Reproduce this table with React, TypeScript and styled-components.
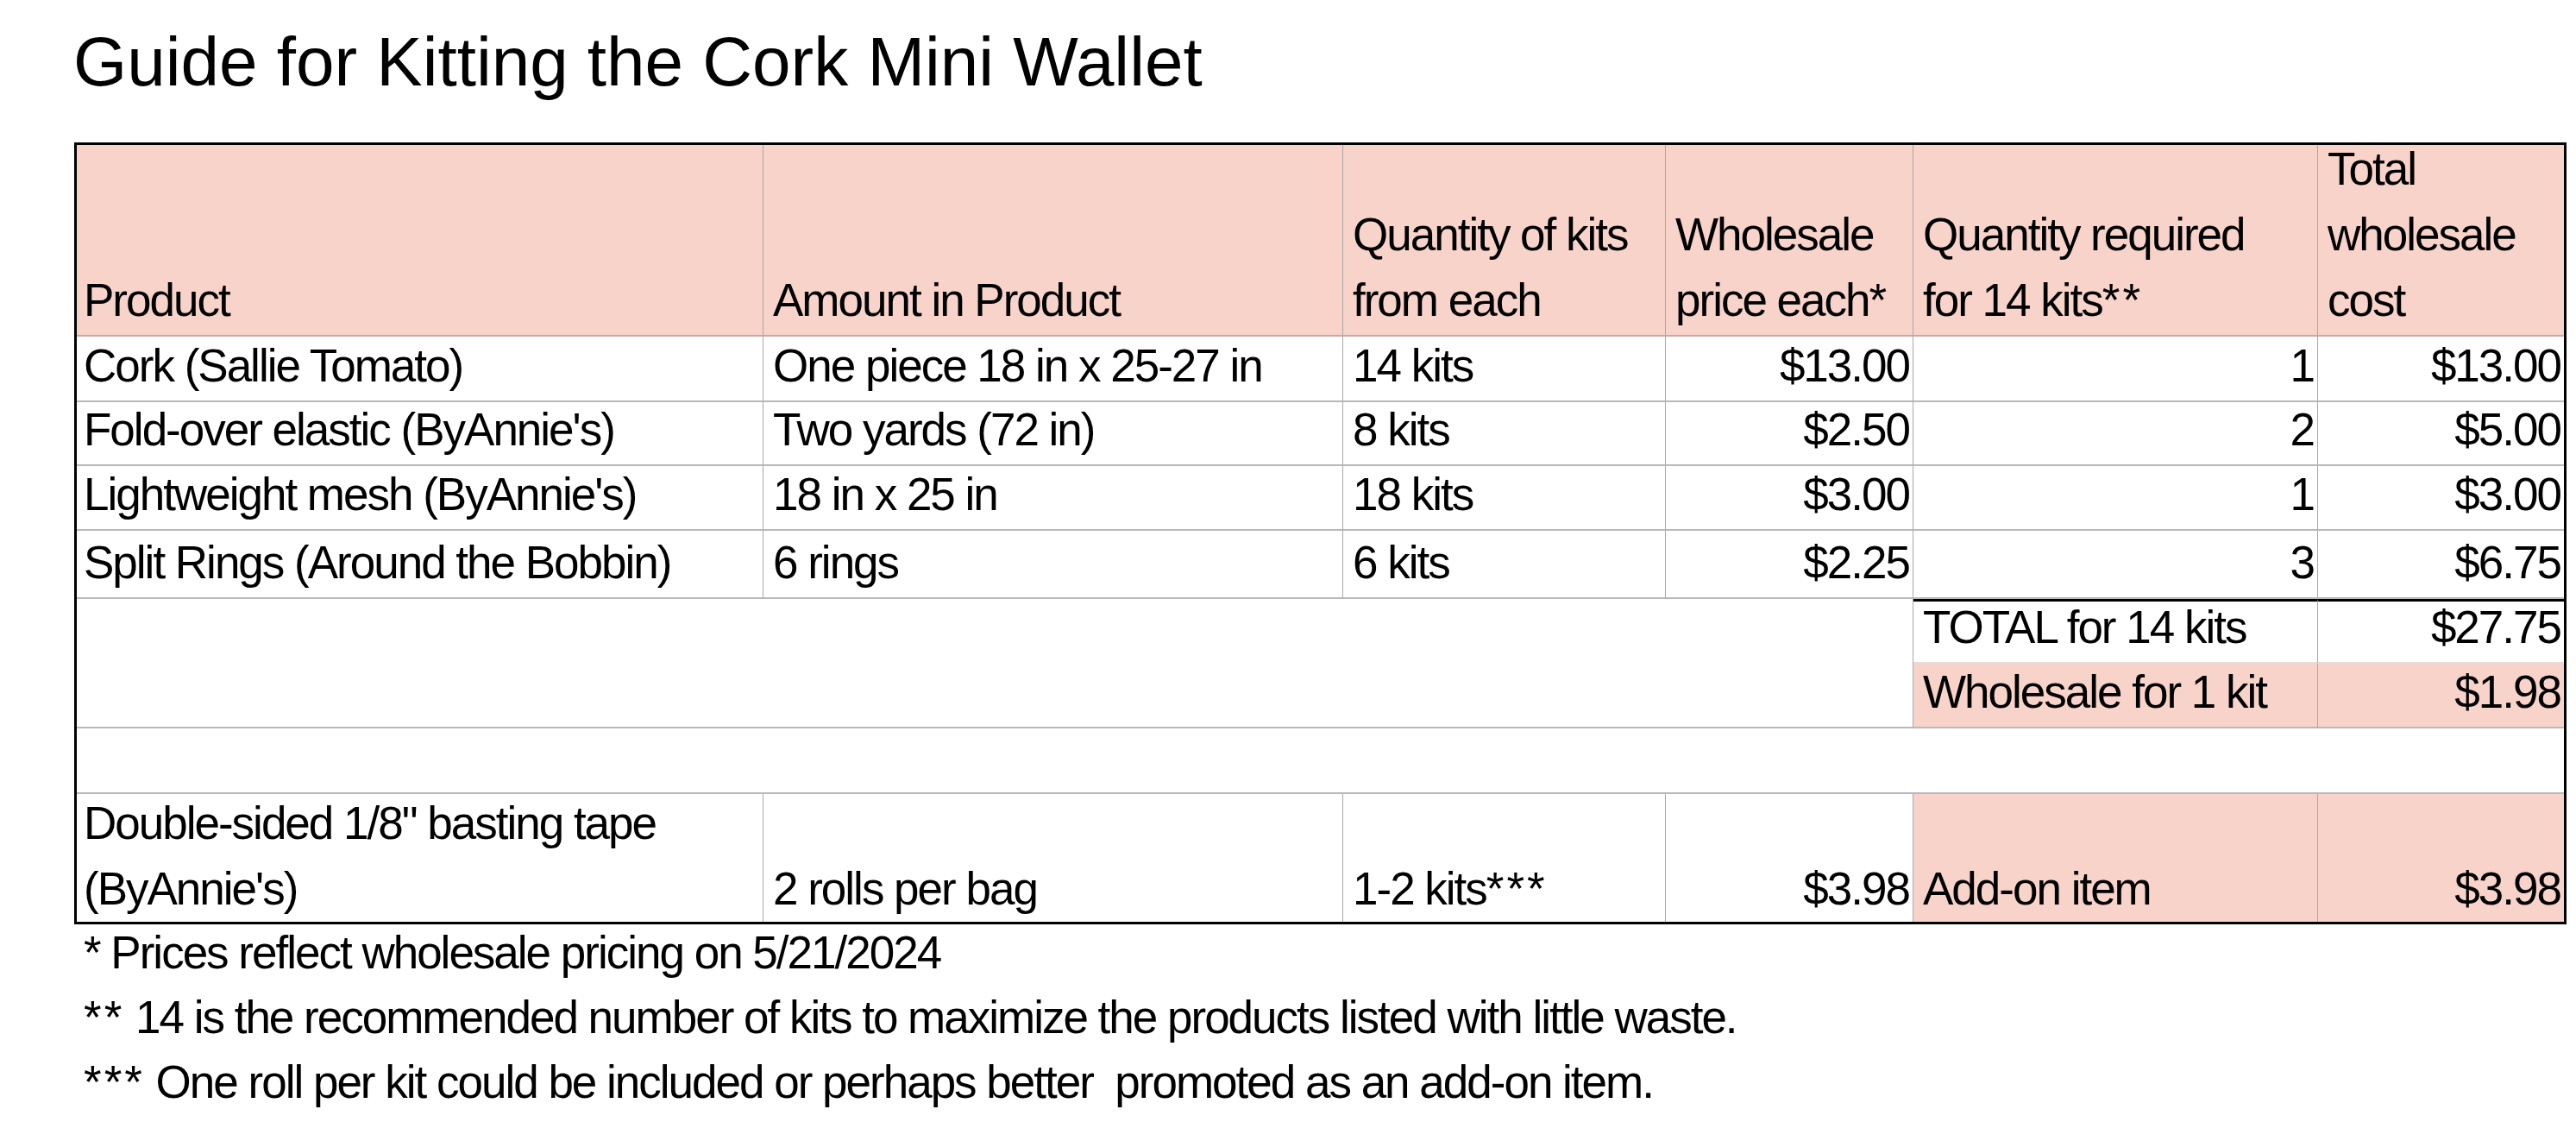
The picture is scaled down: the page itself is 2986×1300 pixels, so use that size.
import React from 'react';
import styled, { createGlobalStyle } from 'styled-components';

const GlobalStyle = createGlobalStyle`
  html, body { margin: 0; padding: 0; background: #ffffff; }
  body { font-family: "Liberation Sans", Arial, sans-serif; color: #000; }
`;

const Page = styled.div`
  padding: 32px 0 0 86px;
  width: 2900px;
`;

const Title = styled.h1`
  margin: 0 0 53px -1px;
  font-family: "Liberation Sans", Arial, sans-serif;
  font-weight: 400;
  font-size: 80px;
  line-height: 80px;
  letter-spacing: 0;
`;

const Table = styled.div`
  display: grid;
  grid-template-columns: 796px 672px 374px 287px 469px 285px;
  grid-template-rows: 222px 76px 74px 75px 79px 75px 75px 76px 148px;
  width: 2883px;
  border: 3px solid #000;
  font-size: 53px;
  letter-spacing: -2px;
  line-height: 76px;
`;

type Bottom = 'row' | 'head' | 'light' | 'none';

const Cell = styled.div<{
  $right?: boolean;
  $pink?: boolean;
  $divider?: boolean;
  $bottom?: Bottom;
  $thickTop?: boolean;
  $first?: boolean;
  $pb?: number;
  $col?: string;
  $row?: string;
}>`
  box-sizing: border-box;
  display: flex;
  align-items: flex-end;
  justify-content: ${(p) => (p.$right ? 'flex-end' : 'flex-start')};
  text-align: ${(p) => (p.$right ? 'right' : 'left')};
  min-width: 0;
  white-space: nowrap;
  background: ${(p) => (p.$pink ? '#f8d3c9' : '#ffffff')};
  border-right: ${(p) => (p.$divider ? '1px solid #a8a8a8' : '0')};
  border-bottom: ${(p) =>
    p.$bottom === 'head'
      ? '2px solid #c7aba3'
      : p.$bottom === 'light'
      ? '2px solid #e2dcda'
      : p.$bottom === 'none'
      ? '0'
      : '2px solid #b9b9b9'};
  border-top: ${(p) => (p.$thickTop ? '3px solid #000' : '0')};
  padding: 0 ${(p) => (p.$right ? 4 : 6)}px ${(p) => p.$pb ?? 2}px
    ${(p) => (p.$first ? 8 : 11)}px;
  grid-column: ${(p) => p.$col ?? 'auto'};
  grid-row: ${(p) => p.$row ?? 'auto'};
`;

const Text = styled.span`
  display: block;
`;

const Stars = styled.span`
  letter-spacing: 3px;
`;

const Footnotes = styled.div`
  margin-top: -5px;
  padding-left: 11px;
  font-size: 53px;
  line-height: 75px;
  letter-spacing: -2px;
`;

const Note = styled.div`
  white-space: nowrap;
`;

type Item = {
  product: string;
  amount: string;
  qty: string;
  price: string;
  req: string;
  total: string;
};

const items: Item[] = [
  {
    product: 'Cork (Sallie Tomato)',
    amount: 'One piece 18 in x 25-27 in',
    qty: '14 kits',
    price: '$13.00',
    req: '1',
    total: '$13.00',
  },
  {
    product: "Fold-over elastic (ByAnnie's)",
    amount: 'Two yards (72 in)',
    qty: '8 kits',
    price: '$2.50',
    req: '2',
    total: '$5.00',
  },
  {
    product: "Lightweight mesh (ByAnnie's)",
    amount: '18 in x 25 in',
    qty: '18 kits',
    price: '$3.00',
    req: '1',
    total: '$3.00',
  },
  {
    product: 'Split Rings (Around the Bobbin)',
    amount: '6 rings',
    qty: '6 kits',
    price: '$2.25',
    req: '3',
    total: '$6.75',
  },
];

export default function App() {
  return (
    <>
      <GlobalStyle />
      <Page>
        <Title>Guide for Kitting the Cork Mini Wallet</Title>
        <Table>
          <Cell $pink $first $divider $bottom="head">
            <Text>Product</Text>
          </Cell>
          <Cell $pink $divider $bottom="head">
            <Text>Amount in Product</Text>
          </Cell>
          <Cell $pink $divider $bottom="head">
            <Text>
              Quantity of kits
              <br />
              from each
            </Text>
          </Cell>
          <Cell $pink $divider $bottom="head">
            <Text>
              Wholesale
              <br />
              price each*
            </Text>
          </Cell>
          <Cell $pink $divider $bottom="head">
            <Text>
              Quantity required
              <br />
              for 14 kits<Stars>**</Stars>
            </Text>
          </Cell>
          <Cell $pink $bottom="head">
            <Text>
              Total
              <br />
              wholesale
              <br />
              cost
            </Text>
          </Cell>

          {items.map((it) => (
            <React.Fragment key={it.product}>
              <Cell $first $divider>
                <Text>{it.product}</Text>
              </Cell>
              <Cell $divider>
                <Text>{it.amount}</Text>
              </Cell>
              <Cell $divider>
                <Text>{it.qty}</Text>
              </Cell>
              <Cell $divider $right>
                <Text>{it.price}</Text>
              </Cell>
              <Cell $divider $right>
                <Text>{it.req}</Text>
              </Cell>
              <Cell $right>
                <Text>{it.total}</Text>
              </Cell>
            </React.Fragment>
          ))}

          <Cell $col="1 / 5" $row="6 / 8" $divider />
          <Cell $col="5" $row="6" $thickTop $divider $bottom="light">
            <Text>TOTAL for 14 kits</Text>
          </Cell>
          <Cell $col="6" $row="6" $thickTop $right $bottom="light">
            <Text>$27.75</Text>
          </Cell>
          <Cell $col="5" $row="7" $pink $divider>
            <Text>Wholesale for 1 kit</Text>
          </Cell>
          <Cell $col="6" $row="7" $pink $right>
            <Text>$1.98</Text>
          </Cell>

          <Cell $col="1 / 7" $row="8" />

          <Cell $first $divider $bottom="none" $pb={0}>
            <Text>
              Double-sided 1/8" basting tape
              <br />
              (ByAnnie's)
            </Text>
          </Cell>
          <Cell $divider $bottom="none" $pb={0}>
            <Text>2 rolls per bag</Text>
          </Cell>
          <Cell $divider $bottom="none" $pb={0}>
            <Text>
              1-2 kits<Stars>***</Stars>
            </Text>
          </Cell>
          <Cell $divider $right $bottom="none" $pb={0}>
            <Text>$3.98</Text>
          </Cell>
          <Cell $divider $pink $bottom="none" $pb={0}>
            <Text>Add-on item</Text>
          </Cell>
          <Cell $pink $right $bottom="none" $pb={0}>
            <Text>$3.98</Text>
          </Cell>
        </Table>
        <Footnotes>
          <Note>* Prices reflect wholesale pricing on 5/21/2024</Note>
          <Note>
            <Stars>**</Stars> 14 is the recommended number of kits to maximize the products listed with little waste.
          </Note>
          <Note>
            <Stars>***</Stars> One roll per kit could be included or perhaps better&nbsp; promoted as an add-on item.
          </Note>
        </Footnotes>
      </Page>
    </>
  );
}
